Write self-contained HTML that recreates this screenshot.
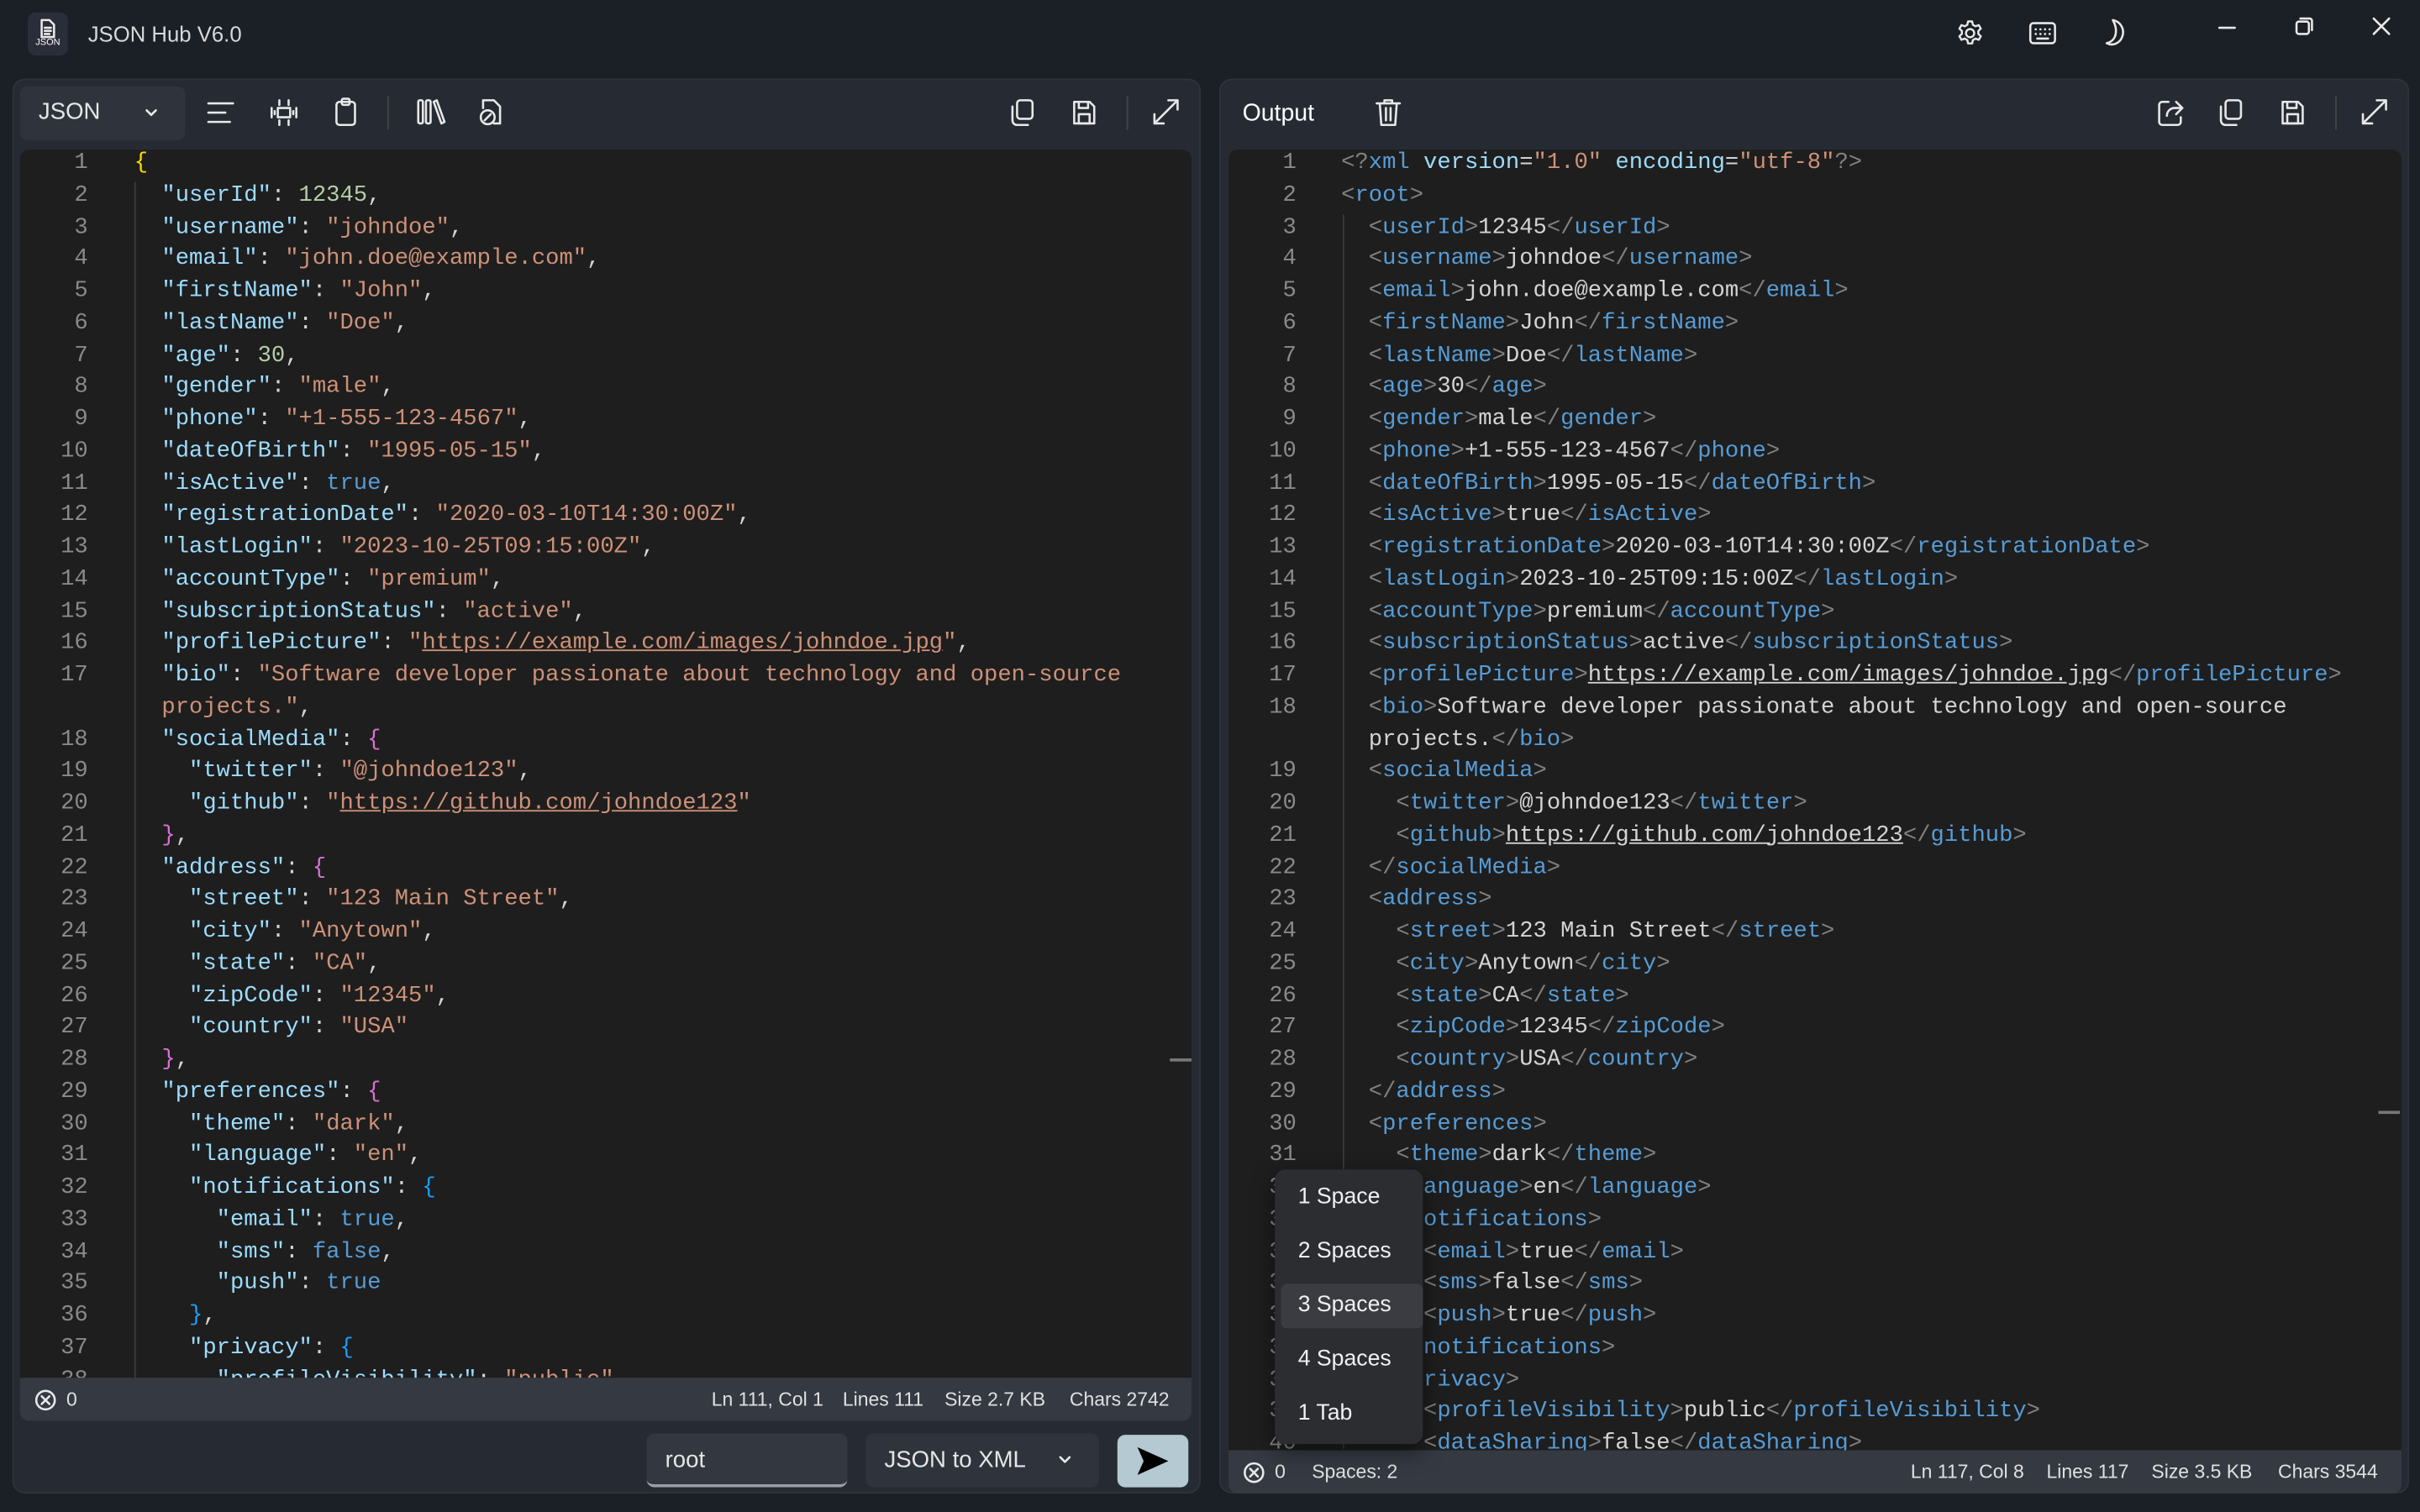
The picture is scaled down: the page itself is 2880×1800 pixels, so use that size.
<!DOCTYPE html>
<html><head><meta charset="utf-8">
<style>
*{box-sizing:border-box;margin:0;padding:0}
html,body{width:2880px;height:1800px;overflow:hidden;background:#1b1f26}
#root{width:1568px;height:980px;transform:scale(1.836735);transform-origin:0 0;position:relative;background:#1b1f26;font-family:"Liberation Sans",sans-serif;color:#e6e6e6}
.abs{position:absolute}
.panel{position:absolute;background:#262b33;border-radius:8px;border:1px solid #2e333b}
.ed{position:absolute;background:#1e1e1e;border-radius:6px 6px 0 0;overflow:hidden}
.gut{position:absolute;top:0;left:0;text-align:right;color:#8a8a8a;font-family:"Liberation Mono",monospace;font-size:14.8px}
.code{position:absolute;top:0;font-family:"Liberation Mono",monospace;font-size:14.8px;color:#d4d4d4;white-space:normal}
.code div{white-space:pre}
.gut div,.code div{height:20.75px;line-height:20.75px}
.k{color:#9cdcfe}.s{color:#ce9178}.n{color:#b5cea8}.y{color:#ffd700}.m{color:#da70d6}.b{color:#179fff}
.t{color:#569cd6}.a{color:#808080}.u{text-decoration:underline}
.status{position:absolute;background:#343942;font-size:12.5px;color:#e0e0e0;border-radius:0 0 6px 6px}
svg{position:absolute;fill:none;stroke:#e8e8e8;stroke-width:1.4;stroke-linecap:round;stroke-linejoin:round}
.menu{position:absolute;background:#2b2d31;border-radius:7px;box-shadow:0 4px 14px rgba(0,0,0,.5);font-size:14.5px;color:#f0f0f0}
.menu div{position:absolute;left:4px;width:92px;height:29px;line-height:29px;padding-left:11px;border-radius:4px}
</style></head><body><div id="root">

<div class="abs" style="left:18px;top:8px;width:26px;height:28px;background:#2a2d3a;border-radius:5px"></div>
<svg style="left:24px;top:12px" width="14" height="14" viewBox="0 0 14 14" stroke-width="1.2"><path d="M3 1h5l3 3v8H3z M5 6h4 M5 8h4 M5 10h3"/></svg>
<div class="abs" style="left:23px;top:25px;font-size:6px;color:#fff">JSON</div>
<div class="abs" style="left:57px;top:14px;font-size:14px;color:#d8d8d8">JSON Hub V6.0</div>
<svg style="left:1267px;top:12px" width="19" height="19" viewBox="0 0 20 20"><circle cx="10" cy="10" r="2.8"/><path d="M8.6 2h2.8l.5 2.3 1.8 1 2.2-.8 1.4 2.4-1.7 1.6v2l1.7 1.6-1.4 2.4-2.2-.8-1.8 1-.5 2.3H8.6l-.5-2.3-1.8-1-2.2.8-1.4-2.4 1.7-1.6v-2L2.7 6.9l1.4-2.4 2.2.8 1.8-1z"/></svg>
<svg style="left:1314px;top:13px" width="19" height="17" viewBox="0 0 19 17"><rect x="1.5" y="2" width="16" height="13" rx="2"/><path d="M5 6h.1M8 6h.1M11 6h.1M14 6h.1M5 9h.1M8 9h.1M11 9h.1M14 9h.1M6 12h7"/></svg>
<svg style="left:1362px;top:11px" width="18" height="20" viewBox="0 0 18 20"><path d="M7 2c5 1 8 6 6 11-1.5 4-6 6-10 4 4-1 6-4 6-8 0-3-1-5-2-7z"/></svg>
<svg style="left:1436px;top:11px" width="14" height="14" viewBox="0 0 14 14"><path d="M2 7h10"/></svg>
<svg style="left:1486px;top:10px" width="14" height="14" viewBox="0 0 14 14"><rect x="2" y="4" width="8" height="8" rx="1.5"/><path d="M4.5 2h6a1.5 1.5 0 0 1 1.5 1.5v6"/></svg>
<svg style="left:1536px;top:10px" width="14" height="14" viewBox="0 0 14 14"><path d="M2 2l10 10M12 2L2 12"/></svg>

<div class="panel" style="left:8px;top:51px;width:770px;height:917px"></div>
<div class="abs" style="left:13px;top:56px;width:107px;height:35px;background:#2f343c;border-radius:5px"></div>
<div class="abs" style="left:25px;top:64px;font-size:15px">JSON</div>
<svg style="left:92px;top:67px" width="12" height="12" viewBox="0 0 12 12" stroke-width="1.1"><path d="M3 4.5l3 3 3-3"/></svg>
<svg style="left:133px;top:64px" width="20" height="18" viewBox="0 0 20 18"><path d="M2 3h16M2 9h11M2 15h14"/></svg>
<svg style="left:174px;top:63px" width="20" height="20" viewBox="0 0 20 20"><path d="M7 2v3M13 2v3M7 15v3M13 15v3M2 7v6M18 7v6M4 9v2M16 9v2"/><rect x="6" y="7" width="8" height="6"/></svg>
<svg style="left:215px;top:62px" width="18" height="21" viewBox="0 0 18 21"><rect x="3" y="4" width="12" height="15" rx="2"/><rect x="6.5" y="2" width="5" height="4" rx="1"/></svg>
<div class="abs" style="left:251px;top:62px;width:1px;height:22px;background:#444"></div>
<svg style="left:269px;top:62px" width="21" height="21" viewBox="0 0 21 21"><rect x="2" y="3" width="3" height="15" rx="1"/><rect x="7" y="3" width="3" height="15" rx="1"/><path d="M12 4l2-1 5 14-2 1z"/></svg>
<svg style="left:309px;top:62px" width="19" height="21" viewBox="0 0 19 21"><path d="M4 8V3h7l4 4v11h-4"/><circle cx="7" cy="14" r="4.5"/><path d="M5 16l4-4"/></svg>
<svg style="left:653px;top:63px" width="19" height="20" viewBox="0 0 19 20"><rect x="6" y="2" width="10" height="12" rx="2"/><path d="M3 6v9a3 3 0 0 0 3 3h7"/></svg>
<svg style="left:693px;top:63px" width="19" height="20" viewBox="0 0 19 20"><path d="M3 3h10l3 3v11H3z"/><rect x="6" y="11" width="7" height="6"/><rect x="6" y="3" width="6" height="4"/></svg>
<div class="abs" style="left:730px;top:62px;width:1px;height:22px;background:#444"></div>
<svg style="left:746px;top:63px" width="19" height="19" viewBox="0 0 19 19"><path d="M11 2h6v6M17 2L2 17M2 11v6h6"/></svg>

<div class="ed" style="left:13px;top:97px;width:759px;height:796px">
<div class="gut" style="width:44px;top:-1px">
<div>1</div><div>2</div><div>3</div><div>4</div><div>5</div><div>6</div><div>7</div><div>8</div><div>9</div><div>10</div><div>11</div><div>12</div><div>13</div><div>14</div><div>15</div><div>16</div><div>17</div><div>&nbsp;</div><div>18</div><div>19</div><div>20</div><div>21</div><div>22</div><div>23</div><div>24</div><div>25</div><div>26</div><div>27</div><div>28</div><div>29</div><div>30</div><div>31</div><div>32</div><div>33</div><div>34</div><div>35</div><div>36</div><div>37</div><div>38</div>
</div>
<div class="abs" style="left:74px;top:21px;width:1px;height:780px;background:#3a3a3a"></div>
<div class="code" style="left:74px;top:-1px">
<div><span class="y">{</span></div>
<div>  <span class="k">"userId"</span>: <span class="n">12345</span>,</div>
<div>  <span class="k">"username"</span>: <span class="s">"johndoe"</span>,</div>
<div>  <span class="k">"email"</span>: <span class="s">"john.doe@example.com"</span>,</div>
<div>  <span class="k">"firstName"</span>: <span class="s">"John"</span>,</div>
<div>  <span class="k">"lastName"</span>: <span class="s">"Doe"</span>,</div>
<div>  <span class="k">"age"</span>: <span class="n">30</span>,</div>
<div>  <span class="k">"gender"</span>: <span class="s">"male"</span>,</div>
<div>  <span class="k">"phone"</span>: <span class="s">"+1-555-123-4567"</span>,</div>
<div>  <span class="k">"dateOfBirth"</span>: <span class="s">"1995-05-15"</span>,</div>
<div>  <span class="k">"isActive"</span>: <span class="t">true</span>,</div>
<div>  <span class="k">"registrationDate"</span>: <span class="s">"2020-03-10T14:30:00Z"</span>,</div>
<div>  <span class="k">"lastLogin"</span>: <span class="s">"2023-10-25T09:15:00Z"</span>,</div>
<div>  <span class="k">"accountType"</span>: <span class="s">"premium"</span>,</div>
<div>  <span class="k">"subscriptionStatus"</span>: <span class="s">"active"</span>,</div>
<div>  <span class="k">"profilePicture"</span>: <span class="s">"<span class="u">https://example.com/images/johndoe.jpg</span>"</span>,</div>
<div>  <span class="k">"bio"</span>: <span class="s">"Software developer passionate about technology and open-source</span></div>
<div>  <span class="s">projects."</span>,</div>
<div>  <span class="k">"socialMedia"</span>: <span class="m">{</span></div>
<div>    <span class="k">"twitter"</span>: <span class="s">"@johndoe123"</span>,</div>
<div>    <span class="k">"github"</span>: <span class="s">"<span class="u">https://github.com/johndoe123</span>"</span></div>
<div>  <span class="m">}</span>,</div>
<div>  <span class="k">"address"</span>: <span class="m">{</span></div>
<div>    <span class="k">"street"</span>: <span class="s">"123 Main Street"</span>,</div>
<div>    <span class="k">"city"</span>: <span class="s">"Anytown"</span>,</div>
<div>    <span class="k">"state"</span>: <span class="s">"CA"</span>,</div>
<div>    <span class="k">"zipCode"</span>: <span class="s">"12345"</span>,</div>
<div>    <span class="k">"country"</span>: <span class="s">"USA"</span></div>
<div>  <span class="m">}</span>,</div>
<div>  <span class="k">"preferences"</span>: <span class="m">{</span></div>
<div>    <span class="k">"theme"</span>: <span class="s">"dark"</span>,</div>
<div>    <span class="k">"language"</span>: <span class="s">"en"</span>,</div>
<div>    <span class="k">"notifications"</span>: <span class="b">{</span></div>
<div>      <span class="k">"email"</span>: <span class="t">true</span>,</div>
<div>      <span class="k">"sms"</span>: <span class="t">false</span>,</div>
<div>      <span class="k">"push"</span>: <span class="t">true</span></div>
<div>    <span class="b">}</span>,</div>
<div>    <span class="k">"privacy"</span>: <span class="b">{</span></div>
<div>      <span class="k">"profileVisibility"</span>: <span class="s">"public"</span>,</div>
</div>
<div class="abs" style="left:745px;top:589px;width:14px;height:2px;background:#777"></div>
</div>
<div class="status" style="left:13px;top:893px;width:759px;height:28px">
<svg style="left:9px;top:7px" width="15" height="15" viewBox="0 0 15 15" stroke-width="1.1"><circle cx="7.5" cy="7.5" r="6"/><path d="M5 5l5 5M10 5l-5 5"/></svg>
<div class="abs" style="left:30px;top:7px">0</div>
<div class="abs" style="left:448px;top:7px">Ln 111, Col 1</div>
<div class="abs" style="left:533px;top:7px">Lines 111</div>
<div class="abs" style="left:599px;top:7px">Size 2.7 KB</div>
<div class="abs" style="left:680px;top:7px">Chars 2742</div>
</div>
<div class="abs" style="left:419px;top:929px;width:130px;height:35px;background:#333840;border-radius:5px;border-bottom:2px solid #9aa0a8"></div>
<div class="abs" style="left:431px;top:938px;font-size:15px">root</div>
<div class="abs" style="left:561px;top:929px;width:151px;height:35px;background:#2f343c;border-radius:5px"></div>
<div class="abs" style="left:573px;top:938px;font-size:15px">JSON to XML</div>
<svg style="left:684px;top:940px" width="12" height="12" viewBox="0 0 12 12" stroke-width="1.1"><path d="M3 4.5l3 3 3-3"/></svg>
<div class="abs" style="left:724px;top:930px;width:46px;height:34px;background:#b4c9d2;border-radius:5px"></div>
<svg style="left:736px;top:937px;fill:#000;stroke:none" width="22" height="20" viewBox="0 0 22 20"><path d="M1 1l20 9-20 9 4-9z"/></svg>

<div class="panel" style="left:790px;top:51px;width:771px;height:917px"></div>
<div class="abs" style="left:805px;top:65px;font-size:15.5px;color:#fff">Output</div>
<svg style="left:890px;top:63px" width="19" height="20" viewBox="0 0 19 20"><path d="M2 4h15M7 4V2h5v2M4 4l1 14h9l1-14M8 7v8M11 7v8"/></svg>
<svg style="left:1397px;top:63px" width="19" height="20" viewBox="0 0 19 20"><path d="M8 3H4a2 2 0 0 0-2 2v11a2 2 0 0 0 2 2h10a2 2 0 0 0 2-2v-3"/><path d="M13 3l4 4-4 4M17 7h-5a5 5 0 0 0-5 5"/></svg>
<svg style="left:1436px;top:63px" width="19" height="20" viewBox="0 0 19 20"><rect x="6" y="2" width="10" height="12" rx="2"/><path d="M3 6v9a3 3 0 0 0 3 3h7"/></svg>
<svg style="left:1476px;top:63px" width="19" height="20" viewBox="0 0 19 20"><path d="M3 3h10l3 3v11H3z"/><rect x="6" y="11" width="7" height="6"/><rect x="6" y="3" width="6" height="4"/></svg>
<div class="abs" style="left:1513px;top:62px;width:1px;height:22px;background:#444"></div>
<svg style="left:1529px;top:63px" width="19" height="19" viewBox="0 0 19 19"><path d="M11 2h6v6M17 2L2 17M2 11v6h6"/></svg>

<div class="ed" style="left:796px;top:97px;width:760px;height:843px">
<div class="gut" style="width:44px;top:-1px">
<div>1</div><div>2</div><div>3</div><div>4</div><div>5</div><div>6</div><div>7</div><div>8</div><div>9</div><div>10</div><div>11</div><div>12</div><div>13</div><div>14</div><div>15</div><div>16</div><div>17</div><div>18</div><div>&nbsp;</div><div>19</div><div>20</div><div>21</div><div>22</div><div>23</div><div>24</div><div>25</div><div>26</div><div>27</div><div>28</div><div>29</div><div>30</div><div>31</div><div>32</div><div>33</div><div>34</div><div>35</div><div>36</div><div>37</div><div>38</div><div>39</div><div>40</div>
</div>
<div class="abs" style="left:74px;top:42px;width:1px;height:800px;background:#3a3a3a"></div>
<div class="code" style="left:73px;top:-1px">
<div><span class="a">&lt;?</span><span class="t">xml</span> <span class="k">version</span>=<span class="s">"1.0"</span> <span class="k">encoding</span>=<span class="s">"utf-8"</span><span class="a">?&gt;</span></div>
<div><span class="a">&lt;</span><span class="t">root</span><span class="a">&gt;</span></div>
<div>  <span class="a">&lt;</span><span class="t">userId</span><span class="a">&gt;</span>12345<span class="a">&lt;/</span><span class="t">userId</span><span class="a">&gt;</span></div>
<div>  <span class="a">&lt;</span><span class="t">username</span><span class="a">&gt;</span>johndoe<span class="a">&lt;/</span><span class="t">username</span><span class="a">&gt;</span></div>
<div>  <span class="a">&lt;</span><span class="t">email</span><span class="a">&gt;</span>john.doe@example.com<span class="a">&lt;/</span><span class="t">email</span><span class="a">&gt;</span></div>
<div>  <span class="a">&lt;</span><span class="t">firstName</span><span class="a">&gt;</span>John<span class="a">&lt;/</span><span class="t">firstName</span><span class="a">&gt;</span></div>
<div>  <span class="a">&lt;</span><span class="t">lastName</span><span class="a">&gt;</span>Doe<span class="a">&lt;/</span><span class="t">lastName</span><span class="a">&gt;</span></div>
<div>  <span class="a">&lt;</span><span class="t">age</span><span class="a">&gt;</span>30<span class="a">&lt;/</span><span class="t">age</span><span class="a">&gt;</span></div>
<div>  <span class="a">&lt;</span><span class="t">gender</span><span class="a">&gt;</span>male<span class="a">&lt;/</span><span class="t">gender</span><span class="a">&gt;</span></div>
<div>  <span class="a">&lt;</span><span class="t">phone</span><span class="a">&gt;</span>+1-555-123-4567<span class="a">&lt;/</span><span class="t">phone</span><span class="a">&gt;</span></div>
<div>  <span class="a">&lt;</span><span class="t">dateOfBirth</span><span class="a">&gt;</span>1995-05-15<span class="a">&lt;/</span><span class="t">dateOfBirth</span><span class="a">&gt;</span></div>
<div>  <span class="a">&lt;</span><span class="t">isActive</span><span class="a">&gt;</span>true<span class="a">&lt;/</span><span class="t">isActive</span><span class="a">&gt;</span></div>
<div>  <span class="a">&lt;</span><span class="t">registrationDate</span><span class="a">&gt;</span>2020-03-10T14:30:00Z<span class="a">&lt;/</span><span class="t">registrationDate</span><span class="a">&gt;</span></div>
<div>  <span class="a">&lt;</span><span class="t">lastLogin</span><span class="a">&gt;</span>2023-10-25T09:15:00Z<span class="a">&lt;/</span><span class="t">lastLogin</span><span class="a">&gt;</span></div>
<div>  <span class="a">&lt;</span><span class="t">accountType</span><span class="a">&gt;</span>premium<span class="a">&lt;/</span><span class="t">accountType</span><span class="a">&gt;</span></div>
<div>  <span class="a">&lt;</span><span class="t">subscriptionStatus</span><span class="a">&gt;</span>active<span class="a">&lt;/</span><span class="t">subscriptionStatus</span><span class="a">&gt;</span></div>
<div>  <span class="a">&lt;</span><span class="t">profilePicture</span><span class="a">&gt;</span><span class="u">https://example.com/images/johndoe.jpg</span><span class="a">&lt;/</span><span class="t">profilePicture</span><span class="a">&gt;</span></div>
<div>  <span class="a">&lt;</span><span class="t">bio</span><span class="a">&gt;</span>Software developer passionate about technology and open-source</div>
<div>  projects.<span class="a">&lt;/</span><span class="t">bio</span><span class="a">&gt;</span></div>
<div>  <span class="a">&lt;</span><span class="t">socialMedia</span><span class="a">&gt;</span></div>
<div>    <span class="a">&lt;</span><span class="t">twitter</span><span class="a">&gt;</span>@johndoe123<span class="a">&lt;/</span><span class="t">twitter</span><span class="a">&gt;</span></div>
<div>    <span class="a">&lt;</span><span class="t">github</span><span class="a">&gt;</span><span class="u">https://github.com/johndoe123</span><span class="a">&lt;/</span><span class="t">github</span><span class="a">&gt;</span></div>
<div>  <span class="a">&lt;/</span><span class="t">socialMedia</span><span class="a">&gt;</span></div>
<div>  <span class="a">&lt;</span><span class="t">address</span><span class="a">&gt;</span></div>
<div>    <span class="a">&lt;</span><span class="t">street</span><span class="a">&gt;</span>123 Main Street<span class="a">&lt;/</span><span class="t">street</span><span class="a">&gt;</span></div>
<div>    <span class="a">&lt;</span><span class="t">city</span><span class="a">&gt;</span>Anytown<span class="a">&lt;/</span><span class="t">city</span><span class="a">&gt;</span></div>
<div>    <span class="a">&lt;</span><span class="t">state</span><span class="a">&gt;</span>CA<span class="a">&lt;/</span><span class="t">state</span><span class="a">&gt;</span></div>
<div>    <span class="a">&lt;</span><span class="t">zipCode</span><span class="a">&gt;</span>12345<span class="a">&lt;/</span><span class="t">zipCode</span><span class="a">&gt;</span></div>
<div>    <span class="a">&lt;</span><span class="t">country</span><span class="a">&gt;</span>USA<span class="a">&lt;/</span><span class="t">country</span><span class="a">&gt;</span></div>
<div>  <span class="a">&lt;/</span><span class="t">address</span><span class="a">&gt;</span></div>
<div>  <span class="a">&lt;</span><span class="t">preferences</span><span class="a">&gt;</span></div>
<div>    <span class="a">&lt;</span><span class="t">theme</span><span class="a">&gt;</span>dark<span class="a">&lt;/</span><span class="t">theme</span><span class="a">&gt;</span></div>
<div>    <span class="a">&lt;</span><span class="t">language</span><span class="a">&gt;</span>en<span class="a">&lt;/</span><span class="t">language</span><span class="a">&gt;</span></div>
<div>    <span class="a">&lt;</span><span class="t">notifications</span><span class="a">&gt;</span></div>
<div>      <span class="a">&lt;</span><span class="t">email</span><span class="a">&gt;</span>true<span class="a">&lt;/</span><span class="t">email</span><span class="a">&gt;</span></div>
<div>      <span class="a">&lt;</span><span class="t">sms</span><span class="a">&gt;</span>false<span class="a">&lt;/</span><span class="t">sms</span><span class="a">&gt;</span></div>
<div>      <span class="a">&lt;</span><span class="t">push</span><span class="a">&gt;</span>true<span class="a">&lt;/</span><span class="t">push</span><span class="a">&gt;</span></div>
<div>    <span class="a">&lt;/</span><span class="t">notifications</span><span class="a">&gt;</span></div>
<div>    <span class="a">&lt;</span><span class="t">privacy</span><span class="a">&gt;</span></div>
<div>      <span class="a">&lt;</span><span class="t">profileVisibility</span><span class="a">&gt;</span>public<span class="a">&lt;/</span><span class="t">profileVisibility</span><span class="a">&gt;</span></div>
<div>      <span class="a">&lt;</span><span class="t">dataSharing</span><span class="a">&gt;</span>false<span class="a">&lt;/</span><span class="t">dataSharing</span><span class="a">&gt;</span></div>
</div>
<div class="abs" style="left:745px;top:623px;width:14px;height:2px;background:#777"></div>
</div>
<div class="status" style="left:796px;top:940px;width:760px;height:28px">
<svg style="left:9px;top:7px" width="15" height="15" viewBox="0 0 15 15" stroke-width="1.1"><circle cx="7.5" cy="7.5" r="6"/><path d="M5 5l5 5M10 5l-5 5"/></svg>
<div class="abs" style="left:30px;top:7px">0</div>
<div class="abs" style="left:54px;top:7px">Spaces: 2</div>
<div class="abs" style="left:442px;top:7px">Ln 117, Col 8</div>
<div class="abs" style="left:530px;top:7px">Lines 117</div>
<div class="abs" style="left:598px;top:7px">Size 3.5 KB</div>
<div class="abs" style="left:680px;top:7px">Chars 3544</div>
</div>

<div class="menu" style="left:826px;top:758px;width:96px;height:178px">
<div style="top:4px">1 Space</div>
<div style="top:39px">2 Spaces</div>
<div style="top:74px;background:#3a3c41">3 Spaces</div>
<div style="top:109px">4 Spaces</div>
<div style="top:144px">1 Tab</div>
</div>

</div></body></html>
